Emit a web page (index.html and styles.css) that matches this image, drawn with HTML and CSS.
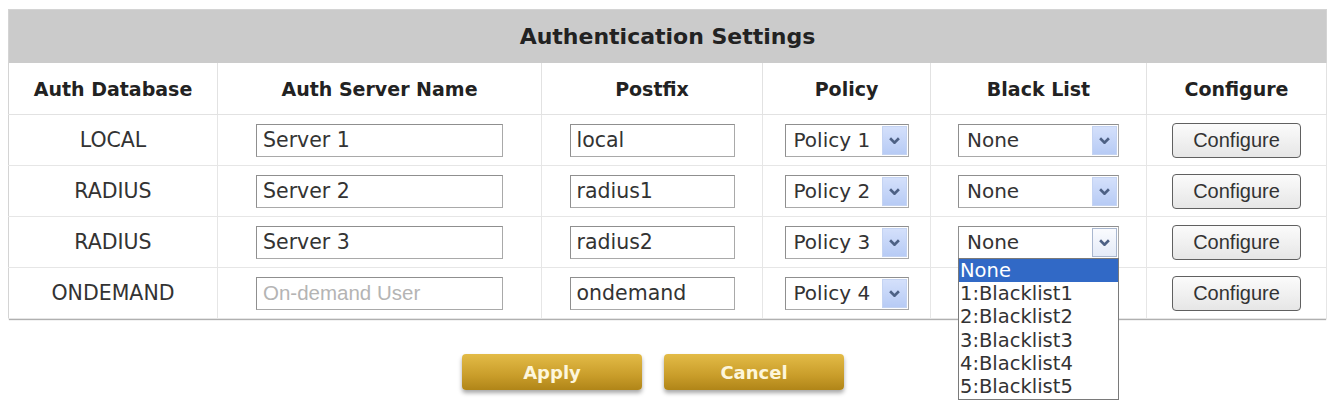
FILE: index.html
```html
<!DOCTYPE html>
<html lang="en">
<head>
  <meta charset="UTF-8">
  <title>Authentication Settings</title>
  <link rel="stylesheet" href="styles.css">
</head>
<body>
  <div class="page">
    <table class="auth-table">
      <colgroup>
        <col class="c1">
        <col class="c2">
        <col class="c3">
        <col class="c4">
        <col class="c5">
        <col class="c6">
      </colgroup>
      <thead>
        <tr>
          <th class="title" colspan="6">Authentication Settings</th>
        </tr>
        <tr class="heads">
          <th>Auth Database</th>
          <th>Auth Server Name</th>
          <th>Postfix</th>
          <th>Policy</th>
          <th>Black List</th>
          <th>Configure</th>
        </tr>
      </thead>
      <tbody>
        <tr>
          <td>LOCAL</td>
          <td><input class="field name" type="text" value="Server 1"></td>
          <td><input class="field postfix" type="text" value="local"></td>
          <td>
            <div class="combo policy"><span class="val">Policy 1</span><span class="arrow"><svg viewBox="0 0 10 6"><path d="M1 1l4 4 4-4"/></svg></span></div>
          </td>
          <td>
            <div class="combo blist"><span class="val">None</span><span class="arrow"><svg viewBox="0 0 10 6"><path d="M1 1l4 4 4-4"/></svg></span></div>
          </td>
          <td><button class="cfg">Configure</button></td>
        </tr>
        <tr>
          <td>RADIUS</td>
          <td><input class="field name" type="text" value="Server 2"></td>
          <td><input class="field postfix" type="text" value="radius1"></td>
          <td>
            <div class="combo policy"><span class="val">Policy 2</span><span class="arrow"><svg viewBox="0 0 10 6"><path d="M1 1l4 4 4-4"/></svg></span></div>
          </td>
          <td>
            <div class="combo blist"><span class="val">None</span><span class="arrow"><svg viewBox="0 0 10 6"><path d="M1 1l4 4 4-4"/></svg></span></div>
          </td>
          <td><button class="cfg">Configure</button></td>
        </tr>
        <tr>
          <td>RADIUS</td>
          <td><input class="field name" type="text" value="Server 3"></td>
          <td><input class="field postfix" type="text" value="radius2"></td>
          <td>
            <div class="combo policy"><span class="val">Policy 3</span><span class="arrow"><svg viewBox="0 0 10 6"><path d="M1 1l4 4 4-4"/></svg></span></div>
          </td>
          <td>
            <div class="combo blist open"><span class="val">None</span><span class="arrow"><svg viewBox="0 0 10 6"><path d="M1 1l4 4 4-4"/></svg></span>
              <ul class="options">
                <li class="sel">None</li>
                <li>1:Blacklist1</li>
                <li>2:Blacklist2</li>
                <li>3:Blacklist3</li>
                <li>4:Blacklist4</li>
                <li>5:Blacklist5</li>
              </ul>
            </div>
          </td>
          <td><button class="cfg">Configure</button></td>
        </tr>
        <tr>
          <td>ONDEMAND</td>
          <td><input class="field name" type="text" placeholder="On-demand User" disabled></td>
          <td><input class="field postfix" type="text" value="ondemand"></td>
          <td>
            <div class="combo policy"><span class="val">Policy 4</span><span class="arrow"><svg viewBox="0 0 10 6"><path d="M1 1l4 4 4-4"/></svg></span></div>
          </td>
          <td></td>
          <td><button class="cfg">Configure</button></td>
        </tr>
      </tbody>
    </table>

    <div class="actions">
      <button class="gold">Apply</button>
      <button class="gold">Cancel</button>
    </div>
  </div>
</body>
</html>
```

FILE: styles.css
```css
body {
  margin: 0;
  background: #fff;
  font-family: "DejaVu Sans", Verdana, sans-serif;
  color: #333;
}
.page {
  padding: 9px 6px 30px 8px;
}
.auth-table {
  width: 1318px;
  border-collapse: collapse;
  border: 1px solid #d4d4d4;
  box-shadow: 0 2px 1px -1px #b0b0b0;
  table-layout: fixed;
}
.c1 { width: 209px; }
.c2 { width: 324px; }
.c3 { width: 221px; }
.c4 { width: 168px; }
.c5 { width: 216px; }
.c6 { width: 180px; }

.auth-table th.title {
  height: 53px;
  padding: 0;
  background: #cbcbcb;
  color: #222;
  font-size: 22px;
  font-weight: bold;
  text-align: center;
}
.heads th {
  height: 51px;
  padding: 0;
  font-size: 19px;
  font-weight: bold;
  color: #222;
  border-right: 1px solid #e2e2e2;
  border-bottom: 1px solid #e2e2e2;
}

.auth-table td {
  height: 50px;
  padding: 0;
  text-align: center;
  vertical-align: middle;
  font-size: 20.5px;
  color: #333;
  border-right: 1px solid #e6e6e6;
  border-bottom: 1px solid #e6e6e6;
}

.field {
  box-sizing: border-box;
  height: 33px;
  padding: 0 6px;
  border: 1px solid #a9a9a9;
  border-top-color: #8f8f8f;
  border-left-color: #8f8f8f;
  font-family: "DejaVu Sans", Verdana, sans-serif;
  font-size: 20.5px;
  color: #333;
  background: #fff;
  vertical-align: middle;
}
.field.name { width: 247px; }
.field.postfix { width: 165px; }
.field:disabled {
  background: #fff;
}
.field::placeholder {
  font-family: "Liberation Sans", Arial, sans-serif;
  font-size: 20.5px;
  color: #b4b4b4;
}

/* drop-down boxes in the old windows look */
.combo {
  position: relative;
  display: inline-flex;
  align-items: center;
  justify-content: space-between;
  box-sizing: border-box;
  height: 33px;
  padding: 0 1px 0 8px;
  border: 1px solid #a9a9a9;
  border-top-color: #8f8f8f;
  border-left-color: #8f8f8f;
  background: #fff;
  font-size: 20px;
  text-align: left;
  vertical-align: middle;
}
.combo.policy { width: 124px; }
.combo.blist { width: 161px; }
.combo .arrow {
  display: flex;
  align-items: center;
  justify-content: center;
  box-sizing: border-box;
  width: 25px;
  height: 29px;
  background: linear-gradient(#d4e0fb, #b7cbf5);
  border: 1px solid #c4d3f2;
}
.combo.open .arrow {
  background: linear-gradient(#fafbfe, #e4ebf8);
  border-color: #a9b7cf;
}
.arrow svg {
  width: 11px;
  height: 7px;
  fill: none;
  stroke: #4d6185;
  stroke-width: 2.4;
}
.options {
  position: absolute;
  left: -1px;
  top: 31px;
  z-index: 2;
  width: 159px;
  margin: 0;
  padding: 0;
  list-style: none;
  background: #fff;
  border: 1px solid #7a7a7a;
}
.options li {
  height: 23.4px;
  line-height: 23px;
  padding-left: 1px;
  font-size: 19.5px;
  color: #333;
}
.options li.sel {
  background: #3169c6;
  color: #fff;
}

.cfg {
  width: 129px;
  height: 35px;
  padding: 0;
  border: 1px solid #606060;
  border-radius: 4px;
  background: linear-gradient(#fbfbfb, #e6e6e6);
  font-family: "Liberation Sans", Arial, sans-serif;
  font-size: 20px;
  color: #333;
  vertical-align: middle;
}

.actions {
  display: flex;
  justify-content: center;
  gap: 22px;
  padding: 35px 28px 0 0;
}
.gold {
  width: 180px;
  height: 36px;
  padding: 0;
  border: none;
  border-radius: 4px;
  background: linear-gradient(#e3bb47, #c99d2a 60%, #b08518);
  box-shadow: 0 3px 4px rgba(0, 0, 0, 0.35);
  font-family: "DejaVu Sans", Verdana, sans-serif;
  font-size: 18px;
  font-weight: bold;
  color: #fdf6dc;
}
```
